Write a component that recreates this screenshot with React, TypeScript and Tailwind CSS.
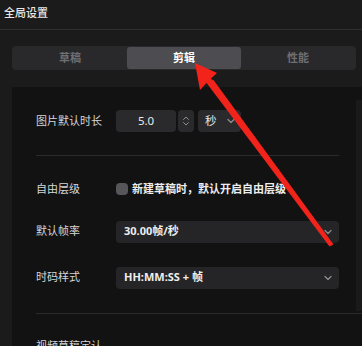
import { ChevronDown, ChevronsUpDown } from "lucide-react";

const font = { fontFamily: '"Noto Sans", "Noto Sans CJK SC", sans-serif' };

function Row({ label, children, className = "" }: { label: string; children: React.ReactNode; className?: string }) {
  return (
    <div className={`flex items-center ${className}`}>
      <div className="w-[80px] shrink-0 text-[11px] text-[#d6d6d6]">{label}</div>
      {children}
    </div>
  );
}

export default function App() {
  const tabs = ["草稿", "剪辑", "性能"];
  const active = 1;

  return (
    <div className="relative h-[346px] w-[362px] overflow-hidden bg-[#1b1b1c] text-white" style={font}>
      {/* Header */}
      <div className="h-[29px] px-[4px] pt-[5px] text-[11px] font-medium text-[#e8e8e8]">全局设置</div>
      <div className="h-px bg-[#2f2f31]" />

      {/* Tabs */}
      <div className="ml-[12px] mr-[6px] mt-[16px] flex h-[24px] rounded-[4px] bg-[#29292c] p-px">
        {tabs.map((t, i) => (
          <div
            key={t}
            className={`flex flex-1 items-center justify-center rounded-[3px] text-[11px] font-bold ${
              i === active ? "bg-[#4d4d51] text-white" : "text-[#6f6f72]"
            }`}
          >
            {t}
          </div>
        ))}
      </div>

      {/* Panel */}
      <div className="ml-[12px] mt-[17px] rounded-tl-[8px] bg-[#121212]">
        <div className="mr-[-7px] rounded-tr-[8px] bg-[#121212]">
          <div className="mr-[5px] pl-[24px] pr-[25px] pt-[23px] rounded-tr-[8px]">
            <Row label="图片默认时长">
              <div className="flex h-[22px] w-[60px] items-center justify-center rounded-[4px] bg-[#2a2a2d] text-[11.5px] text-[#e8e8e8]">
                5.0
              </div>
              <div className="ml-[2px] flex h-[22px] w-[16px] items-center justify-center rounded-[4px] bg-[#2a2a2d] text-[#8d8d90]">
                <ChevronsUpDown size={12} strokeWidth={2} />
              </div>
              <div className="ml-[4px] flex h-[22px] w-[43px] items-center justify-between rounded-[4px] bg-[#2a2a2d] pl-[7px] pr-[4px] text-[11.5px] text-[#e8e8e8]">
                秒
                <ChevronDown size={12} strokeWidth={2.5} className="text-[#8d8d90]" />
              </div>
            </Row>
            <div className="mt-[23px] h-px bg-[#2a2a2c]" />

            <Row label="自由层级" className="mt-[25px]">
              <div className="h-[12px] w-[12px] rounded-[4px] bg-[#55555a]" />
              <div className="ml-[4px] text-[11px] font-bold text-[#eeeeee]">新建草稿时，默认开启自由层级</div>
            </Row>

            <Row label="默认帧率" className="mt-[23px]">
              <div className="flex h-[22px] flex-1 items-center justify-between rounded-[4px] bg-[#252528] pl-[8px] pr-[5px] text-[11px] font-bold text-[#eeeeee]">
                30.00帧/秒
                <ChevronDown size={12} strokeWidth={2.5} className="text-[#8d8d90]" />
              </div>
            </Row>

            <Row label="时码样式" className="mt-[24px]">
              <div className="flex h-[22px] flex-1 items-center justify-between rounded-[4px] bg-[#252528] pl-[8px] pr-[5px] text-[11px] font-bold text-[#eeeeee]">
                HH:MM:SS + 帧
                <ChevronDown size={12} strokeWidth={2.5} className="text-[#8d8d90]" />
              </div>
            </Row>
            <div className="h-[24px]" />
          </div>
        </div>
        <div className="ml-[24px] h-px bg-[#2a2a2c]" />
        <div className="pl-[24px] pt-[24px] text-[11px] text-[#d6d6d6]">视频草稿定认</div>
      </div>

      {/* scrollbar strip */}
      <div className="absolute right-0 top-[100px] h-[211px] w-[6px] bg-[#1a1a1b]" />

      {/* Annotation arrow */}
      <svg className="pointer-events-none absolute left-0 top-0" width="362" height="346" viewBox="0 0 362 346">
        <polygon points="202.5,77.5 213.5,80 333.5,244.5 329.5,246.5" fill="#f2231b" />
        <polygon points="195,63 217,73 211,78.5 212.5,82 206.5,83 200,90" fill="#f2231b" />
      </svg>
    </div>
  );
}
